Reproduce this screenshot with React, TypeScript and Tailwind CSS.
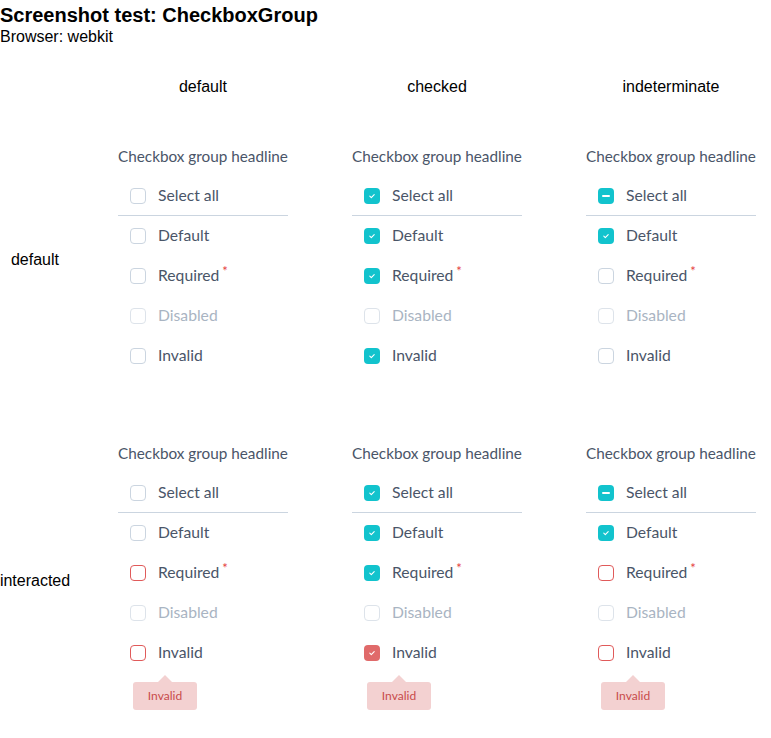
import React from "react";

type State = "off" | "on" | "mixed";
type Tone = "normal" | "error" | "disabled";

type Item = { label: string; state: State; tone: Tone; required?: boolean };

function Box({ state, tone }: { state: State; tone: Tone }) {
  let cls = "border border-[#cbd5e0] bg-white";
  if (tone === "disabled") cls = "border border-[#dde3ea] bg-white";
  if (tone === "error" && state === "off") cls = "border border-[#e05a5a] bg-white";
  if (state !== "off") cls = tone === "error" ? "bg-[#e06a6a]" : "bg-[#12c3cd]";
  return (
    <span className={`flex h-4 w-4 shrink-0 items-center justify-center rounded-[4px] ${cls}`}>
      {state === "on" && (
        <svg width="8" height="8" viewBox="0 0 8 8" fill="none">
          <path d="M1.8 4.2 3.3 5.6 6.2 2.6" stroke="white" strokeWidth="1.1" strokeLinecap="round" strokeLinejoin="round" />
        </svg>
      )}
      {state === "mixed" && <span className="h-[2px] w-2 rounded-full bg-white" />}
    </span>
  );
}

function Row({ item, divider }: { item: Item; divider?: boolean }) {
  return (
    <div className={`flex h-10 items-center gap-3 pl-3 ${divider ? "border-b border-[#cbd5e0]" : ""}`}>
      <Box state={item.state} tone={item.tone} />
      <span className={`whitespace-nowrap text-[15.7px] ${item.tone === "disabled" ? "text-[#a9b4c2]" : "text-[#4a5568]"}`}>
        {item.label}
        {item.required && <span className="relative -top-[5px] ml-[3px] text-[13px] text-[#e53e3e]">*</span>}
      </span>
    </div>
  );
}

function Group({ items, tooltip }: { items: Item[]; tooltip?: boolean }) {
  return (
    <div className="ml-8 w-[170px] font-['Lato',sans-serif]">
      <div className="whitespace-nowrap pt-6 text-[15.3px] leading-6 text-[#4a5568]">Checkbox group headline</div>
      <div className="mt-2">
        {items.map((it, i) => (
          <Row key={i} item={it} divider={i === 0} />
        ))}
      </div>
      {tooltip && (
        <div className="relative ml-[15px] mt-[9px] w-16">
          <span className="absolute -top-[7px] left-[25px] h-0 w-0 border-x-[7px] border-b-[7px] border-x-transparent border-b-[#f3d1d1]" />
          <div className="flex h-7 items-center justify-center rounded-[3px] bg-[#f3d1d1] text-[12px] text-[#c84b4b]">Invalid</div>
        </div>
      )}
    </div>
  );
}

const mk = (s: State[], t: Tone[]): Item[] => [
  { label: "Select all", state: s[0], tone: t[0] },
  { label: "Default", state: s[1], tone: t[1] },
  { label: "Required", state: s[2], tone: t[2], required: true },
  { label: "Disabled", state: s[3], tone: "disabled" },
  { label: "Invalid", state: s[4], tone: t[4] },
];

const N: Tone[] = ["normal", "normal", "normal", "disabled", "normal"];
const E: Tone[] = ["normal", "normal", "error", "disabled", "error"];

const rows = [
  {
    label: "default",
    height: "h-[280px]",
    tooltip: false,
    cells: [
      mk(["off", "off", "off", "off", "off"], N),
      mk(["on", "on", "on", "off", "on"], N),
      mk(["mixed", "on", "off", "off", "off"], N),
    ],
  },
  {
    label: "interacted",
    height: "h-[328px]",
    tooltip: true,
    cells: [
      mk(["off", "off", "off", "off", "off"], E),
      mk(["on", "on", "on", "off", "on"], ["normal", "normal", "normal", "disabled", "error"]),
      mk(["mixed", "on", "off", "off", "off"], E),
    ],
  },
];

export default function App() {
  return (
    <div className="h-[738px] w-[771px] overflow-hidden bg-white font-['Liberation_Sans',Arial,sans-serif] text-black">
      <h1 className="mt-[1px] text-[20px] font-bold leading-[28px]">Screenshot test: CheckboxGroup</h1>
      <div className="text-[16px] leading-4">Browser: webkit</div>

      <div className="flex h-[75px] items-center pt-[9px] text-[16px]">
        <div className="w-[86px] shrink-0" />
        {["default", "checked", "indeterminate"].map((h) => (
          <div key={h} className="w-[234px] shrink-0 text-center">{h}</div>
        ))}
      </div>

      {rows.map((r) => (
        <div key={r.label} className={`flex ${r.height} ${r.label === "interacted" ? "mt-[17px]" : ""}`}>
          <div className="flex w-[70px] shrink-0 items-center justify-center text-[16px]">{r.label}</div>
          <div className="w-4 shrink-0" />
          {r.cells.map((c, i) => (
            <div key={i} className="w-[234px] shrink-0">
              <Group items={c} tooltip={r.tooltip} />
            </div>
          ))}
        </div>
      ))}
    </div>
  );
}
